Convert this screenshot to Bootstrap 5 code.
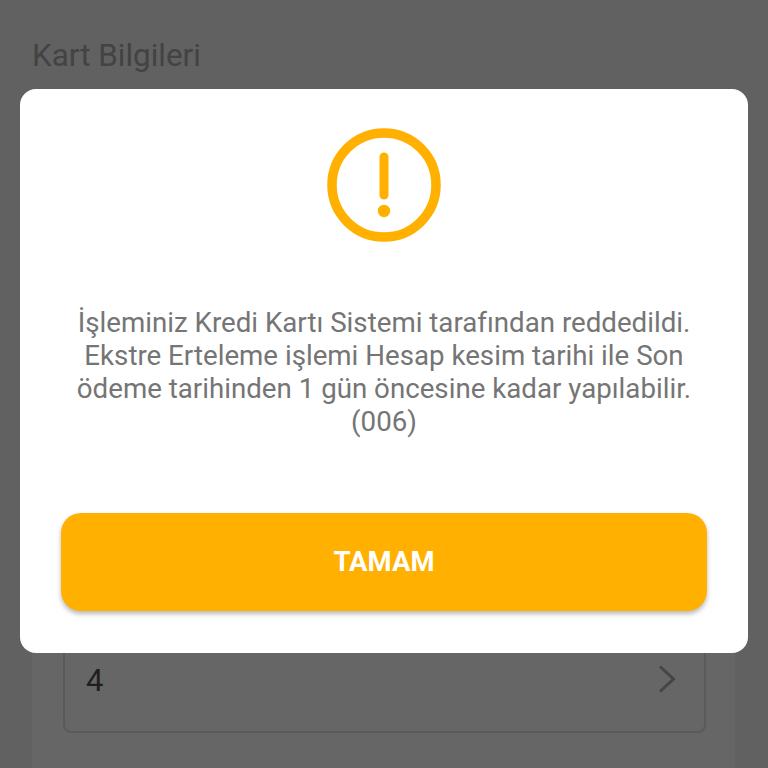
<!DOCTYPE html>
<html lang="tr">
<head>
<meta charset="utf-8">
<title>Kart Bilgileri</title>
<link href="https://cdn.jsdelivr.net/npm/bootstrap@5.3.0/dist/css/bootstrap.min.css" rel="stylesheet">
<style>
html,body{height:768px;overflow:hidden}
body{background:#616161;font-family:Roboto,"Liberation Sans",sans-serif;position:relative}
.page-title{font-size:31.4px;line-height:34px;color:#434343;margin:0;padding:39px 32px 0;font-weight:400}
.under-panel{background:#666;margin:40px 33px 0 32px;height:655px;padding:0 29px 35px 31px;display:flex;flex-direction:column;justify-content:flex-end}
.field-box{height:200px;border:2px solid #5a5a5a;border-radius:8px;padding:0 28px 0 21px;display:flex;align-items:flex-end;justify-content:space-between}
.field-val{font-size:31px;line-height:34px;color:#1f1f1f;margin-bottom:33px}
.field-chev{margin-bottom:38px}
.dialog-box{position:absolute;left:20px;top:89px;width:728px;height:564px;background:#fff;border-radius:16px;padding:39px 41px 42px;display:flex;flex-direction:column;align-items:center}
.dialog-msg{margin-top:64px;font-size:27.7px;line-height:33px;color:#757575;text-align:center;width:100%;white-space:nowrap}
.dialog-btn{margin-top:auto;width:100%;height:98px;background:#ffb000;border:0;border-radius:20px;color:#fff;font-size:27.5px;font-weight:700;box-shadow:0 3px 5px rgba(0,0,0,.28)}
.dialog-btn:hover,.dialog-btn:active{background:#ffb000!important;color:#fff!important}
</style>
</head>
<body>
<h1 class="page-title">Kart Bilgileri</h1>
<div class="under-panel">
  <div class="field-box">
    <span class="field-val">4</span>
    <svg class="field-chev" width="18" height="28" viewBox="0 0 18 28" aria-hidden="true"><path d="M2 1.5 15.5 14 2 26.5" fill="none" stroke="#454545" stroke-width="3"/></svg>
  </div>
</div>
<div class="dialog-box">
  <svg width="114" height="114" viewBox="0 0 114 114" aria-hidden="true">
    <circle cx="57" cy="57" r="52" fill="none" stroke="#ffb000" stroke-width="9.5"/>
    <rect x="52.5" y="24.5" width="9" height="47" rx="4.5" fill="#ffb000"/>
    <circle cx="57" cy="83" r="6.2" fill="#ffb000"/>
  </svg>
  <p class="dialog-msg mb-0">İşleminiz Kredi Kartı Sistemi tarafından reddedildi.<br>Ekstre Erteleme işlemi Hesap kesim tarihi ile Son<br>ödeme tarihinden 1 gün öncesine kadar yapılabilir.<br>(006)</p>
  <button type="button" class="btn dialog-btn">TAMAM</button>
</div>
<script src="https://cdn.jsdelivr.net/npm/bootstrap@5.3.0/dist/js/bootstrap.bundle.min.js"></script>
</body>
</html>
